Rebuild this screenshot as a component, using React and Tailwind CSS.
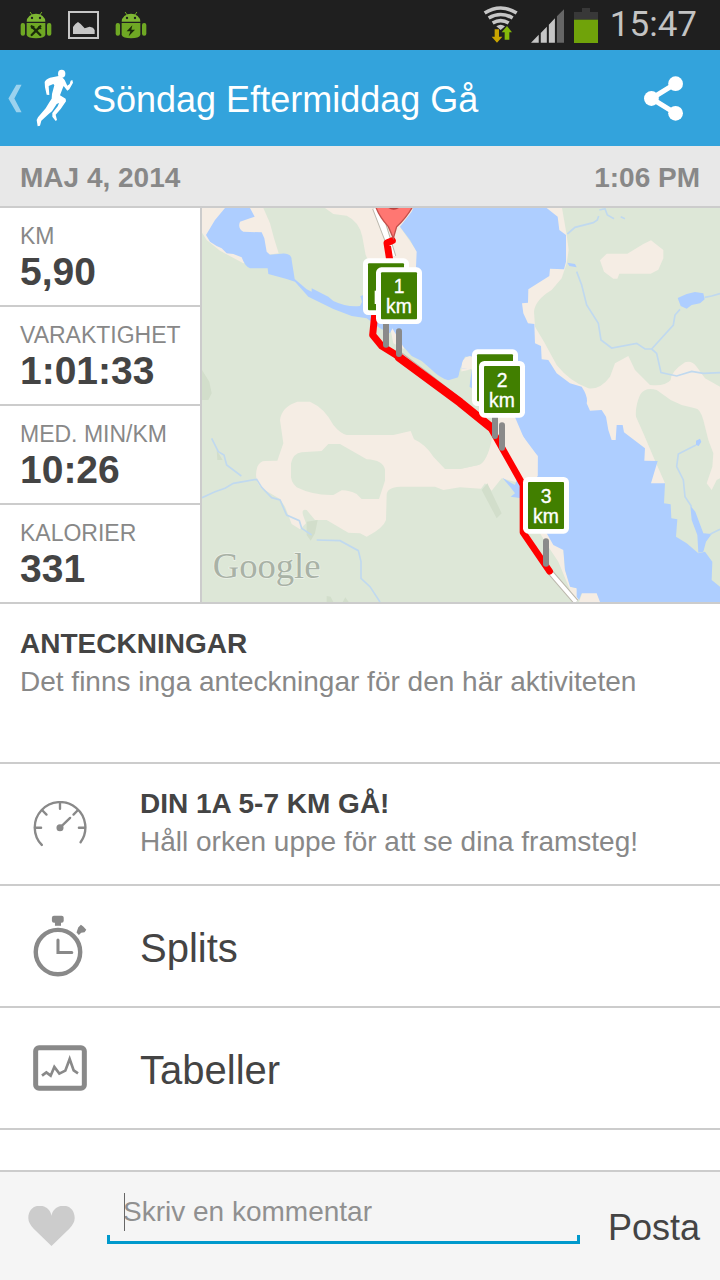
import React, { useState } from "react";

const stats = [
  { label: "KM", value: "5,90" },
  { label: "VARAKTIGHET", value: "1:01:33" },
  { label: "MED. MIN/KM", value: "10:26" },
  { label: "KALORIER", value: "331" },
];

const AndroidIcon = ({ children }) => (
  <svg viewBox="0 0 94 84" className="w-8 h-7" fill="#6fa824" aria-hidden="true">
    <path d="M30 4l6 9M64 4l-6 9" stroke="#6fa824" strokeWidth="3" strokeLinecap="round" />
    <path d="M19 32a28 24 0 0 1 56 0z" fill="#7eb633" />
    <circle cx="35" cy="21" r="3.5" fill="#1f1f1f" />
    <circle cx="59" cy="21" r="3.5" fill="#1f1f1f" />
    <path d="M19 36h56v36q-4 10-28 10t-28-10z" />
    <rect x="1" y="36" width="13" height="38" rx="6" />
    <rect x="80" y="36" width="13" height="38" rx="6" />
    {children}
  </svg>
);

const StatusBar = () => (
  <div className="flex items-center justify-between h-[50px] pl-5 pr-[23px] bg-[#1f1f1f]">
    <div className="flex items-center gap-4">
      <AndroidIcon>
        <path d="M34 46l26 26M60 46L34 72" stroke="#1b2b0a" strokeWidth="7" strokeLinecap="round" />
        <path d="M32 50l6 2 3-7M56 45l1 7 6 1" fill="none" stroke="#1b2b0a" strokeWidth="4" />
      </AndroidIcon>
      <svg viewBox="0 0 93 84" className="w-[31px] h-7" aria-hidden="true">
        <rect x="3" y="3" width="87" height="78" fill="none" stroke="#c6c6c6" strokeWidth="6" />
        <path d="M15 69V48l7-9 8-6 8 6 12 13 15-5 10 3 5 7v12z" fill="#c6c6c6" />
      </svg>
      <AndroidIcon>
        <path d="M51 43L34 61h11l-5 15 19-20H48z" fill="#1b2b0a" />
      </AndroidIcon>
    </div>
    <div className="flex items-center">
      <svg viewBox="66 16 108 114" className="w-9 h-[38px] mr-3" aria-hidden="true">
        <g fill="none" stroke="#c6c6c6" strokeWidth="11">
          <path d="M71 37Q119 7 167 37" />
          <path d="M83 52Q119 31 155 52" />
          <path d="M95 67Q119 53 143 67" />
        </g>
        <path d="M106 77q13-9 26 0l-13 11z" fill="#c6c6c6" />
        <path d="M101 86h13v22h10l-16 18-16-18h9z" fill="#c9a400" />
        <path d="M138 76l15 19h-8v22h-14V95h-9z" fill="#84b80a" />
      </svg>
      <svg viewBox="214 20 98 106" className="w-[33px] h-9 mr-2.5" aria-hidden="true">
        <path d="M214 126l23-24v24zM243 97l18-19v48h-18zM267 72l18-19v73h-18z" fill="#c6c6c6" />
        <path d="M291 47l21-21v100h-21z" fill="#666" />
      </svg>
      <svg viewBox="342 21 72 105" className="w-6 h-[35px] mr-3" aria-hidden="true">
        <path d="M366 21h24v12h24v23h-72V33h24z" fill="#383838" />
        <path d="M342 56h72v70h-72z" fill="#70a30a" />
      </svg>
      <span className="font-[Roboto,sans-serif] text-[35px] leading-10 text-[#c3c3c3]">15:47</span>
    </div>
  </div>
);

const Header = () => (
  <header className="flex items-center h-24 pl-2 pr-[37px] bg-[#33a3dc] text-white">
    <button type="button" aria-label="Tillbaka" className="flex items-center mr-3">
      <svg viewBox="26 250 42 88" className="w-[14px] h-[29px] mr-2" aria-hidden="true">
        <path d="M51 252h16l-22 42 22 42H51L27 294z" fill="#9bd2ee" />
      </svg>
      <svg viewBox="0 3 150 198" className="w-[50px] h-[66px]" fill="white" aria-hidden="true">
        <ellipse cx="95" cy="29" rx="11" ry="12" />
        <path d="M86 36L60 41Q46 47 44 54L45 70 50 92 58 93 56 66 70 60 73 64 66 90 65 104 58 115 47 133 24 160 20 168 23 187 30 185 34 170 56 150 66 142 80 120 87 117 83 127 67 147 67 158 77 171 81 168 77 152 92 135 108 112 107 104 90 94 98 73 101 66 112 80 118 76 129 56 127 48 122 50 119 60 112 65 104 48 96 39Z" />
      </svg>
    </button>
    <h1 className="flex-1 pt-1 text-4xl">Söndag Eftermiddag Gå</h1>
    <button type="button" aria-label="Dela">
      <svg viewBox="552 227 114 134" className="w-[39px] h-[45px]" fill="white" aria-hidden="true">
        <path d="M645 250l-72 44 72 44" fill="none" stroke="white" strokeWidth="15" />
        <circle cx="645" cy="250" r="22" />
        <circle cx="573" cy="294" r="22" />
        <circle cx="645" cy="338" r="22" />
      </svg>
    </button>
  </header>
);

const KmSign = ({ x, y, km }) => (
  <g>
    <rect x={x} y={y} width="138" height="170" rx="16" fill="white" />
    <rect x={x + 15} y={y + 15} width="108" height="141" rx="3" fill="#417f00" />
    {km && (
      <g fontSize="58" fill="white" stroke="white" strokeWidth="1" textAnchor="middle">
        <text x={x + 69} y={y + 78}>{km}</text>
        <text x={x + 69} y={y + 138}>km</text>
      </g>
    )}
  </g>
);

const RouteMap = () => (
  <svg
    viewBox="6 24 1554 1182"
    preserveAspectRatio="xMidYMid slice"
    className="absolute inset-0 w-full h-full bg-[#dde7d7]"
    role="img"
    aria-label="Karta"
  >
    {/* open land */}
    <g fill="#f5ede4">
      <path d="M6 24H190L210 70L222 115L236 160L205 164L130 190L60 152L20 120L6 98Z" />
      <path d="M375 24H650L600 80L652 155L654 195L670 200L672 230L640 260H540L497 165L487 110Q478 65 440 47L400 42Z" />
      <path d="M570 380L600 400L614 432L612 448L580 430Z" />
      <path d="M240 660Q245 620 292 605H330Q375 625 400 675Q420 700 440 705H580L632 693L642 718Q675 732 700 770L735 807H780L835 795Q862 785 875 720L880 640H950L1015 765L1015 830L960 850L905 835L875 872L855 850L843 866L780 862L730 870L705 860H600Q560 862 560 885L558 960Q550 985 500 1010L480 1000L445 998L380 960H345L320 930Q304 925 309 945L318 970L300 988L275 972L255 920L240 897L185 865Q160 840 172 800Q180 783 195 783L232 782L250 730Z" />
      <path d="M1040 24H1086L1100 104L1106 150L1100 190L1085 235L1055 270Q1005 300 1002 335L1005 380L1032 425L1070 495Q1110 545 1165 565Q1200 570 1230 530L1245 490L1285 468L1305 510Q1325 530 1350 555Q1395 560 1412 540Q1412 515 1455 487Q1475 480 1490 500L1515 535L1560 560V835L1550 840L1535 870L1520 850L1537 800L1540 760L1525 720L1510 660Q1500 625 1485 625L1445 615L1412 600L1370 570Q1335 560 1320 585Q1305 620 1308 650L1330 700L1360 770L1395 850L1340 900L1150 660L940 420L940 100Z" />
      <path d="M784 505Q784 470 810 470L860 480V520H784ZM1020 1000H1040L1090 1045L1095 1110L1112 1160L1130 1165L1137 1200L1120 1195L1100 1145L1075 1085L1045 1040ZM1137 1206L1147 1178H1190L1202 1206Z" />
    </g>
    <path d="M1200 181L1220 161H1282L1330 132L1353 121L1390 150V175L1375 209L1352 221H1258L1252 236H1240L1212 215Z" fill="#f5ede4" />
    <path d="M273 790Q280 760 305 757L365 753L385 732H420L500 778Q550 780 555 810V842L537 897H485L470 882Q445 870 425 871L400 885Q340 887 290 862Q270 845 273 820Z" fill="#dde7d7" />

    {/* lakes */}
    <g fill="#aeceff">
      <path d="M75 24H150L164 50L150 55L120 65Q112 85 130 95L185 97L193 115L200 155L210 164L235 162Q275 155 275 180L284 237L320 268L335 275V265L385 290L400 303Q440 322 480 318L486 305L481 288L500 283L560 330L580 380L570 400L540 385L500 355L455 348L400 327L325 290L285 245L260 237L205 222L203 205H150Q135 200 125 172L100 162L80 160L65 145L50 138L30 125L18 105L45 60Z" />
      <path d="M640 24H1040L1073 50L1078 90L1098 105V185L1092 208L1050 206L1048 228L985 268L984 308L966 310L970 340L984 370L1003 372L1005 430L1023 438L1025 478L1045 480L1070 520L1110 550L1145 560Q1165 590 1160 610L1170 632L1205 630L1218 650L1225 690L1235 720L1247 720L1250 675H1268L1272 697L1335 745L1333 782L1373 783L1353 850L1395 850L1392 910L1412 913L1414 955L1432 958L1428 1010L1460 1030L1495 1060L1515 1055L1537 1085L1535 1140L1560 1160V1206H1200L1190 1180H1145L1137 1200L1130 1190V1165L1110 1160L1095 1110L1090 1050L1060 1035L1040 1000L985 900V850L1012 830L1013 768L990 745L970 710L955 690L940 650L890 600L830 575L808 560L810 508L784 505Q784 475 810 470H795L780 508L775 532Q765 545 745 541Q720 535 690 505L665 483L635 468L610 440L580 390L560 350V260H640L665 235L648 200L650 155L630 120L600 80L635 35Z" />
      <path d="M1433 294L1460 282L1485 276L1510 280L1514 298L1500 310L1475 315L1460 326L1442 318ZM1102 188L1125 192L1130 202L1108 198ZM907 833L935 850L945 855L950 840L965 850V895L932 890L945 880L930 860Z" />
      <path d="M1488 722L1500 716L1504 725L1496 738L1488 735ZM1471 917L1486 935L1510 1000L1535 1002L1518 1025L1510 1055L1495 1058L1492 1005L1475 960Z" />
    </g>
    <path d="M784 505Q784 472 810 468L850 480V520L808 508Z" fill="#f5ede4" />
    <path d="M816 508L808 560L830 575L890 600L870 720Q860 790 835 795L780 807L700 760L760 600L745 541L775 532L780 515Z" fill="#dde7d7" />
    <path d="M870 640H940L970 710L1013 768V828L965 850L900 720Z" fill="#f5ede4" />

    {/* woods */}
    <g fill="#d2decb">
      <path d="M6 510L28 545L35 580L25 600H6ZM50 750L68 780H52ZM320 965L353 960L345 1000L332 1022L320 1005ZM845 870L862 850L905 940L890 955Z" />
      <path d="M380 1206V1188L392 1190L400 1206ZM428 1206L436 1192L446 1206Z" />
    </g>

    {/* streams */}
    <g fill="none" stroke="#c0d9ef" strokeWidth="5">
      <path d="M6 893L45 875L75 865L100 850L170 838L185 862L215 893L240 900L260 945L298 962L305 985L335 1005M350 1020L420 1022L475 1052L483 1085V1135L510 1160L540 1206" />
      <path d="M35 715L55 755L72 765L80 795L124 828M1102 102L1125 82L1180 68L1192 60L1196 48M1198 30L1215 26L1222 45L1242 56M1262 50L1275 56" />
      <path d="M1130 215L1145 255L1160 315L1195 370L1203 420L1235 444L1310 430L1335 447H1355L1420 375L1425 345L1440 328M1355 447L1370 460L1383 518L1430 528L1475 514L1510 520L1560 518M1514 292L1535 288L1560 281" />
      <path d="M1488 735L1435 762L1430 800L1450 840L1455 890L1475 920M1530 1003L1560 988" />
    </g>

    {/* road */}
    <g fill="none">
      <path d="M525 24L562 120M535 24L580 170M597 462L700 540L790 612M1045 1110L1128 1206" stroke="#bcb8ad" strokeWidth="18" />
      <path d="M525 24L562 120M535 24L580 170M597 462L700 540L790 612M1045 1110L1128 1206" stroke="white" strokeWidth="12" />
    </g>

    <g fill="none" stroke="red" strokeLinecap="round" strokeLinejoin="round">
      <path d="M577 122L561 129L570 185L524 345L518 405L545 438L597 470" strokeWidth="21" />
      <path d="M597 472L780 607L870 680" strokeWidth="26" />
      <path d="M870 680L969 855V997L1049 1114" strokeWidth="20" />
    </g>
    <path d="M527 20Q538 50 565 80L580 115L590 80Q618 55 638 20Z" fill="#ff7772" stroke="#c34f4b" strokeWidth="4" />
    <path d="M565 24Q581 34 597 24Z" fill="#b8403c" />

    <path
      d="M558 370V434M597 394V462M885 655V708M906 676V743M1038 1024V1091"
      stroke="#8a8a8a"
      strokeWidth="18"
      strokeLinecap="round"
    />
    {/* return leg, mostly covered by the signs in front */}
    <KmSign x={489} y={175} />
    <path d="M524 272h6v40h-6z" fill="white" />
    <KmSign x={528} y={202} km="1" />
    <KmSign x={816} y={448} />
    <KmSign x={837} y={483} km="2" />
    <KmSign x={969} y={831} km="3" />

    <text
      x="38"
      y="1134"
      fontSize="110"
      fill="#a9b2a6"
      stroke="#edf2ea"
      strokeWidth="4"
      paintOrder="stroke"
      className="font-['Liberation_Serif',serif]"
    >
      Google
    </text>
  </svg>
);

const GaugeIcon = () => (
  <svg viewBox="100 64 160 136" className="w-[54px] h-[46px]" fill="none" stroke="#898989" strokeWidth="7" strokeLinecap="round" aria-hidden="true">
    <path d="M126 194A75 75 0 1 1 241 186" />
    <path d="M180 70v17M106 143h18M254 143h-18M128 92l12 12M232 92l-12 12M180 143l30-29" />
    <circle cx="180" cy="143" r="7" fill="#898989" />
  </svg>
);

const StopwatchIcon = () => (
  <svg viewBox="100 406 160 184" className="w-[54px] h-[62px]" fill="#898989" aria-hidden="true">
    <circle cx="174" cy="516" r="66" fill="none" stroke="#898989" strokeWidth="13" />
    <path d="M174 480v37h41" fill="none" stroke="#898989" strokeWidth="9" strokeLinecap="round" />
    <rect x="156" y="408" width="35" height="21" rx="6" />
    <rect x="165" y="426" width="18" height="12" />
    <path d="M234 443l8-8 7 5 9 10-5 7-10 2-7 6-7-7z" />
  </svg>
);

const ChartIcon = () => (
  <svg viewBox="99 75 162 138" className="w-[54px] h-[46px]" fill="none" stroke="#898989" aria-hidden="true">
    <rect x="107" y="83" width="146" height="122" rx="10" strokeWidth="15" />
    <path d="M126 167l13-10 13 10 11-26 15 20 18-9 13-35 12 34 13 9" strokeWidth="8" />
  </svg>
);

const MenuRow = ({ icon, children }) => (
  <button type="button" className="flex items-center w-full h-[122px] pl-[33px] border-b-2 border-[#cccccc] text-left">
    <span className="w-[107px]">{icon}</span>
    {children}
  </button>
);

const App = () => {
  const [comment, setComment] = useState("");

  return (
    <div className="flex flex-col min-h-screen bg-white text-[#444444] font-['Liberation_Sans',Arial,sans-serif]">
      <StatusBar />
      <Header />

      <div className="flex items-center justify-between h-[62px] px-5 pt-1 bg-[#e8e8e8] border-b-2 border-[#cccccc] text-[28px] font-bold text-[#888888]">
        <span>MAJ 4, 2014</span>
        <span>1:06 PM</span>
      </div>

      <section className="flex border-b-2 border-[#cccccc]">
        <dl className="w-[202px] border-r-2 border-[#cccccc] divide-y-2 divide-[#cccccc]">
          {stats.map((stat) => (
            <div key={stat.label} className="pl-5 pt-3.5 pb-3">
              <dt className="text-[23px] leading-7 text-[#888888] whitespace-nowrap">{stat.label}</dt>
              <dd className="text-[39px] leading-[43px] font-bold">{stat.value}</dd>
            </div>
          ))}
        </dl>
        <div className="relative flex-1 overflow-hidden">
          <RouteMap />
        </div>
      </section>

      <section className="h-40 px-5 pt-5 border-b-2 border-[#cccccc]">
        <h2 className="text-[28px] leading-10 font-bold">ANTECKNINGAR</h2>
        <p className="text-[28px] leading-9 text-[#888888]">Det finns inga anteckningar för den här aktiviteten</p>
      </section>

      <MenuRow icon={<GaugeIcon />}>
        <span className="pb-1">
          <span className="block text-[28px] leading-10 font-bold">DIN 1A 5-7 KM GÅ!</span>
          <span className="block text-[28px] leading-9 text-[#888888]">Håll orken uppe för att se dina framsteg!</span>
        </span>
      </MenuRow>
      <MenuRow icon={<StopwatchIcon />}>
        <span className="pt-1 text-[40px]">Splits</span>
      </MenuRow>
      <MenuRow icon={<ChartIcon />}>
        <span className="pt-1 text-[40px]">Tabeller</span>
      </MenuRow>

      <form
        onSubmit={(e) => e.preventDefault()}
        className="flex items-center h-[110px] mt-auto pl-7 pr-5 bg-[#f5f5f5] border-t-2 border-[#cccccc]"
      >
        <button type="button" aria-label="Gilla" className="mr-8">
          <svg viewBox="84 166 138 122" className="w-[47px] h-[41px]" fill="#cccccc" aria-hidden="true">
            <path d="M153 195C146 154 84 154 84 202q0 15 16 32l53 51 53-51q16-17 16-32C222 154 160 154 153 195z" />
          </svg>
        </button>
        <div className="relative flex-1 mb-5">
          <input
            type="text"
            aria-label="Skriv en kommentar"
            placeholder="Skriv en kommentar"
            value={comment}
            onChange={(e) => setComment(e.target.value)}
            className="block w-full h-[46px] px-4 text-[28px] outline-none placeholder:text-[#909090]"
          />
          {!comment && <span className="absolute left-[17px] top-1 w-px h-[38px] bg-[#666666]" />}
          <div className="h-[9px] border-x-3 border-b-3 border-[#0099cc]" />
        </div>
        <button type="submit" className="ml-7 pt-1 text-4xl">Posta</button>
      </form>
    </div>
  );
};

export default App;
